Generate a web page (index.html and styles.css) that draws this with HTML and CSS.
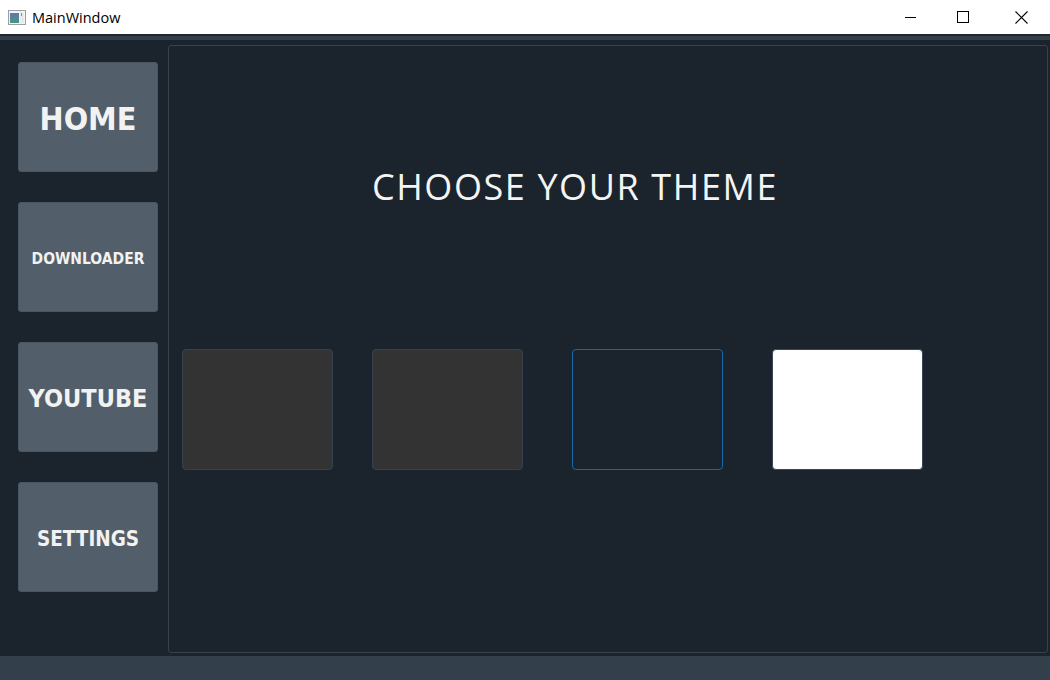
FILE: index.html
```html
<!DOCTYPE html>
<html>
<head>
<meta charset="utf-8">
<link rel="stylesheet" href="styles.css">
</head>
<body>
<div class="titlebar">
  <div class="app-title">
    <svg class="app-icon" width="18" height="15" viewBox="0 0 18 15">
      <rect x="0.5" y="0.5" width="17" height="14" fill="#f2f4f4" stroke="#9aa0a4"/>
      <rect x="2" y="3" width="9" height="10" fill="#4f8f86"/>
      <rect x="2" y="3" width="9" height="5" fill="#5a7ea8"/>
      <rect x="12" y="3" width="4" height="10" fill="#e6eaea"/>
      <rect x="13" y="3" width="1" height="3" fill="#6a9a8a"/>
    </svg>
    <span>MainWindow</span>
  </div>
  <div class="controls">
    <div class="ctl"><svg width="12" height="12" viewBox="0 0 12 12"><line x1="0" y1="6.5" x2="11" y2="6.5" stroke="#000" stroke-width="1"/></svg></div>
    <div class="ctl"><svg width="12" height="12" viewBox="0 0 12 12"><rect x="0.5" y="0.5" width="11" height="11" fill="none" stroke="#000" stroke-width="1"/></svg></div>
    <div class="ctl"><svg width="13" height="13" viewBox="0 0 13 13"><path d="M0.5 0.5 L12.5 12.5 M12.5 0.5 L0.5 12.5" stroke="#000" stroke-width="1.1" fill="none"/></svg></div>
  </div>
</div>
<div class="topstrip"></div>
<div class="window">
  <nav class="sidebar">
    <div class="navbtn home">HOME</div>
    <div class="navbtn down">DOWNLOADER</div>
    <div class="navbtn yt">YOUTUBE</div>
    <div class="navbtn set">SETTINGS</div>
  </nav>
  <main class="panel">
    <h1 class="heading">CHOOSE YOUR THEME</h1>
    <div class="themes">
      <div class="swatch s1"></div>
      <div class="swatch s2"></div>
      <div class="swatch s3"></div>
      <div class="swatch s4"></div>
    </div>
  </main>
</div>
<div class="statusbar"></div>
</body>
</html>
```
FILE: styles.css
```css
* { box-sizing: border-box; }
html, body { margin: 0; padding: 0; }
body {
  width: 1050px;
  height: 680px;
  overflow: hidden;
  background: #1b232d;
  font-family: "DejaVu Sans", sans-serif;
  display: flex;
  flex-direction: column;
}
.titlebar {
  height: 34px;
  background: #ffffff;
  display: flex;
  align-items: center;
  justify-content: space-between;
  flex: none;
}
.app-title {
  display: flex;
  align-items: center;
  padding-left: 8px;
  font-family: "Open Sans", "Noto Sans", sans-serif;
  font-size: 14.5px;
  color: #000;
}
.app-icon { margin-right: 6px; margin-top: 1px; }
.controls { display: flex; height: 34px; }
.ctl {
  width: 58px;
  display: flex;
  align-items: center;
  justify-content: center;
}
.ctl:first-child { width: 46px; }
.topstrip {
  height: 6px;
  flex: none;
  background: #323e48;
  border-top: 2px solid #1f2832;
}
.window {
  flex: 1;
  display: flex;
  padding: 5px 2px 3px 18px;
  background: #1b232d;
}
.sidebar {
  width: 140px;
  display: flex;
  flex-direction: column;
  gap: 30px;
  padding-top: 17px;
  margin-right: 10px;
}
.navbtn {
  height: 110px;
  padding-top: 3px;
  background: #525f6a;
  border: 1px solid #4a5661;
  border-radius: 3px;
  display: flex;
  align-items: center;
  justify-content: center;
  color: #f2f2f2;
  font-family: "DejaVu Sans Condensed", "DejaVu Sans", sans-serif;
  font-stretch: condensed;
  font-weight: bold;
}
.home { font-size: 32px; }
.down { font-size: 15.5px; }
.yt { font-size: 25px; }
.set { font-size: 20.5px; }
.panel {
  flex: 1;
  border: 1px solid #36434f;
  border-radius: 3px;
  padding: 0 0 0 13px;
}
.heading {
  margin: 116px 0 0 0;
  width: 786px;
  text-align: center;
  font-family: "Open Sans", sans-serif;
  font-weight: 400;
  font-size: 36px;
  letter-spacing: 1.6px;
  line-height: 50px;
  color: #f4f4f4;
}
.themes {
  display: flex;
  margin-top: 137px;
}
.swatch {
  width: 151px;
  height: 121px;
  border-radius: 4px;
  border: 1px solid #36434f;
}
.s1 { background: #333333; }
.s2 { background: #333333; margin-left: 39px; }
.s3 { background: #1b232d; border-color: #1668a6; margin-left: 49px; }
.s4 { background: #ffffff; border-color: #3a4754; margin-left: 49px; }
.statusbar {
  height: 24px;
  flex: none;
  background: #333f4a;
}
```
